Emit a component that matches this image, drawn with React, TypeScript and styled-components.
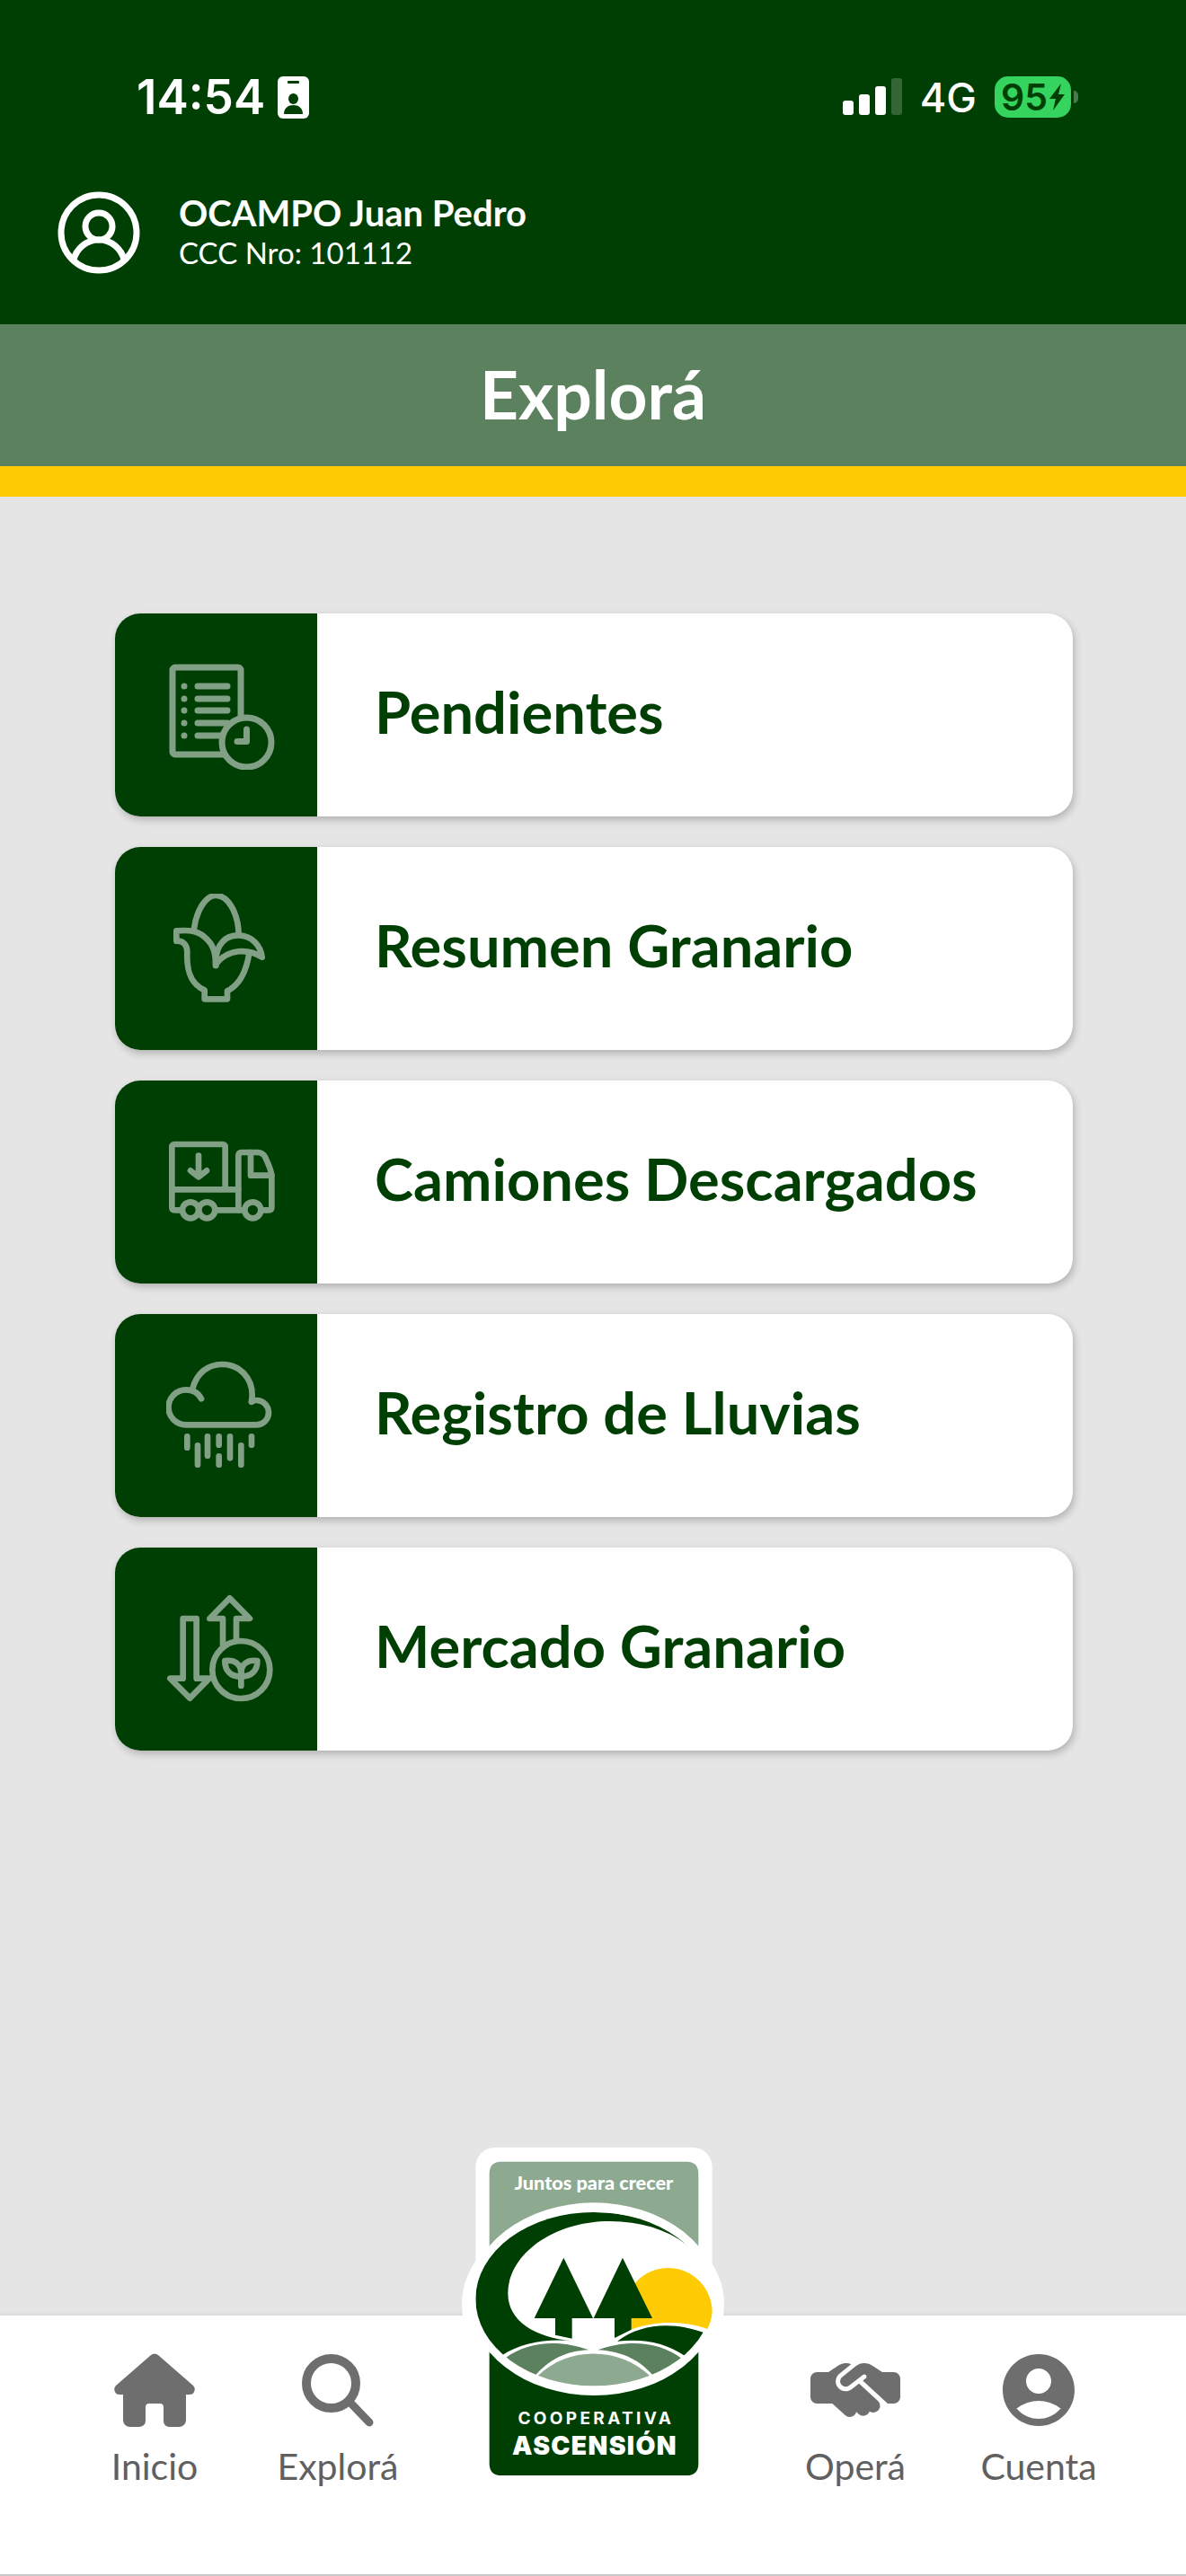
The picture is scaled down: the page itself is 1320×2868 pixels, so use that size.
import React, { FC, ReactNode } from "react";
import styled, { createGlobalStyle } from "styled-components";
import { FaHandshakeSimple } from "react-icons/fa6";
import { MdAccountCircle } from "react-icons/md";

const GREEN = "#003f03";
const SAGE = "#5c815f";
const MINT = "#8da990";
const YELLOW = "#ffcb05";

interface MenuItem {
  label: string;
  icon: ReactNode;
}

interface TabItem {
  label: string;
  icon: ReactNode;
}

const PendingIcon: FC = () => (
  <LineIcon viewBox="0 0 122 122">
    <rect x="7" y="8" width="76" height="97" rx="3" />
    <path d="M20 29v.01M20 43v.01M20 56v.01M20 70v.01M20 84v.01" />
    <path d="M35 29h33M35 43h33M35 56h33M35 70h33M35 84h27" />
    <circle cx="89.5" cy="91.5" r="27.5" fill={GREEN} />
    <path d="M89.5 77v13.500H79" />
  </LineIcon>
);

const CornIcon: FC = () => (
  <LineIcon viewBox="75 105 366 366" $thick>
    <path d="M168 222C175 165 205 111 241 111C280 111 314 165 317 238" />
    <path d="M240 345C240 300 232 278 212 258C186 230 160 225 109 229V263C134 262 145 278 145 300C143 350 150 405 203 427V457H279V430C320 410 342 368 352 304" />
    <path d="M241 345C236 270 278 243 318 244C362 246 390 278 395 317C350 288 282 288 243 338" />
  </LineIcon>
);

const TruckIcon: FC = () => (
  <LineIcon viewBox="75 45 366 366" $thick>
    <path d="M272 253V112Q272 102 262 102H104Q94 102 94 112V312Q94 322 104 322H125M94 253H316" />
    <path d="M316 322V141Q316 129 328 129H380Q398 129 406 146C416 168 427 194 427 206V312Q427 322 417 322H397" />
    <path d="M357 129V206H427M240 322H330" />
    <circle cx="156" cy="322" r="27" />
    <circle cx="211" cy="322" r="27" />
    <circle cx="364" cy="322" r="27" />
    <path d="M183 140V208M156 190L183 211L210 190" />
  </LineIcon>
);

const RainIcon: FC = () => (
  <LineIcon viewBox="75 75 366 366" $thick>
    <path d="M192 202C181 180 164 172 141 172A58 58 0 0 0 141 289H376A41 41 0 0 0 376 207Q368 207 360 212" />
    <path d="M163 168C177 115 215 87 262 87C320 87 362 132 362 190L360 212" />
    <path d="M145 328V365M180 358V422M213 328V392M251 328V356M251 394V422M288 328V400M325 358V422M360 328V356" />
  </LineIcon>
);

const MarketIcon: FC = () => (
  <LineIcon viewBox="75 75 366 366" $thick>
    <path d="M131 156H176V356H219L154 422L88 356H131Z" />
    <path d="M264 244V156H220L287 88L354 156H309V234" />
    <circle cx="325" cy="327" r="96" fill={GREEN} />
    <path d="M325 381V325" />
    <path d="M325 350C290 350 270 330 271 297C304 293 325 307 325 340C325 307 346 293 379 297C380 330 360 350 325 350" />
  </LineIcon>
);

const ProfileIcon: FC = () => (
  <svg width="92" height="92" viewBox="0 0 92 92" fill="none" stroke="#fff" strokeWidth="7">
    <circle cx="46" cy="46" r="42" />
    <circle cx="46" cy="39" r="15" />
    <path d="M18 76C21 64 32 54 46 54C60 54 71 64 74 76" />
  </svg>
);

const BadgeIcon: FC = () => (
  <svg width="35" height="47" viewBox="0 0 35 47">
    <rect width="35" height="47" rx="6" fill="#fff" />
    <rect x="11" y="5" width="13" height="3" rx="1" fill={GREEN} />
    <ellipse cx="17.500" cy="25" rx="5.500" ry="6" fill={GREEN} />
    <path d="M7 42C7 35 12 32 17.500 32S28 35 28 42Z" fill={GREEN} />
  </svg>
);

const SignalIcon: FC = () => (
  <svg width="66" height="42" viewBox="0 0 66 42" fill="#fff">
    <rect y="25" width="12" height="16" rx="3" />
    <rect x="18" y="18" width="12" height="23" rx="3" />
    <rect x="36" y="9" width="12" height="32" rx="3" />
    <rect x="54" width="12" height="41" rx="3" opacity="0.2" />
  </svg>
);

const BoltIcon: FC = () => (
  <svg width="17" height="31" viewBox="0 0 17 31">
    <path d="M13 0L0 17H7L4 30L17 12H10Z" fill={GREEN} />
  </svg>
);

const HomeIcon: FC = () => (
  <svg width="90" height="82" viewBox="0 0 90 82">
    <path
      d="M41 2Q45 -1 49 2L88 36Q91 39 89 43Q88 46 84 46H80V75Q79 81 73 82H61Q55 81 55 75V60Q55 56 51 56H39Q35 56 35 60V75Q35 81 28 82H17Q11 81 10 75V46H6Q2 46 1 43Q-1 39 2 36Z"
      fill="#6e6e6e"
    />
  </svg>
);

const SearchIcon: FC = () => (
  <svg width="80" height="82" viewBox="0 0 80 82" fill="none" stroke="#6e6e6e">
    <circle cx="32.500" cy="33.500" r="27.500" strokeWidth="10" />
    <path d="M53 54L75 77" strokeWidth="9" strokeLinecap="round" />
  </svg>
);

const CoopLogo: FC = () => (
  <LogoSvg viewBox="46 62 876 1098" role="img" aria-label="Cooperativa Ascensión">
    <defs>
      <clipPath id="scene">
        <ellipse cx="487" cy="568" rx="395" ry="290" />
      </clipPath>
    </defs>
    <rect x="92" y="62" width="790" height="1098" rx="64" fill="#fff" />
    <ellipse cx="484" cy="585" rx="438" ry="325" fill="#fff" />
    <path d="M138 600V149Q138 109 178 109H796Q836 109 836 149V600Z" fill={MINT} />
    <path d="M138 600H836V1117Q836 1157 796 1157H178Q138 1157 138 1117Z" fill={GREEN} />
    <ellipse cx="487" cy="568" rx="418" ry="322" fill="#fff" />
    <g clipPath="url(#scene)">
      <path
        d="M160 770L92 700V278H487C640 278 770 335 833 418C760 345 660 308 540 308C350 308 200 420 200 550C200 640 290 697 415 708C330 700 250 712 178 757Z"
        fill={GREEN}
      />
      <path d="M190 766C270 705 380 705 470 738C390 742 340 770 290 824L270 860Z" fill={SAGE} />
      <path d="M500 738C590 705 700 705 782 768L730 840L683 822C635 765 570 742 500 738Z" fill={SAGE} />
      <path d="M298 826C400 725 570 725 676 826L640 880H340Z" fill={MINT} />
      <path d="M565 709C650 645 760 645 860 682L880 720L793 759C720 710 650 700 565 709Z" fill={GREEN} />
    </g>
    <path d="M588 612A147 148 0 0 1 882 612Q880 640 866 668C790 640 690 640 612 670Z" fill={YELLOW} />
    <path d="M386 430L484 632H414V700L358 688V632H288Z" fill={GREEN} />
    <path d="M583 430L682 632H612V670L556 698V632H486Z" fill={GREEN} />
    <g fill="#fff" textAnchor="middle">
      <text x="487" y="202" fontSize="65" fontFamily="Lato, sans-serif" fontWeight="900">
        Juntos para crecer
      </text>
      <text x="494" y="986" fontSize="57" fontFamily="Inter, sans-serif" fontWeight="700" letterSpacing="10">
        COOPERATIVA
      </text>
      <text x="490" y="1088" fontSize="85" fontFamily="Inter, sans-serif" fontWeight="900" letterSpacing="4">
        ASCENSIÓN
      </text>
    </g>
  </LogoSvg>
);

const menu: MenuItem[] = [
  { label: "Pendientes", icon: <PendingIcon /> },
  { label: "Resumen Granario", icon: <CornIcon /> },
  { label: "Camiones Descargados", icon: <TruckIcon /> },
  { label: "Registro de Lluvias", icon: <RainIcon /> },
  { label: "Mercado Granario", icon: <MarketIcon /> },
];

const leftTabs: TabItem[] = [
  { label: "Inicio", icon: <HomeIcon /> },
  { label: "Explorá", icon: <SearchIcon /> },
];

const rightTabs: TabItem[] = [
  { label: "Operá", icon: <FaHandshakeSimple size={100} /> },
  { label: "Cuenta", icon: <MdAccountCircle size={96} /> },
];

const Tabs: FC<{ tabs: TabItem[] }> = ({ tabs }) => (
  <TabGroup>
    {tabs.map((tab) => (
      <TabLink href="#" key={tab.label}>
        <TabIcon>{tab.icon}</TabIcon>
        {tab.label}
      </TabLink>
    ))}
  </TabGroup>
);

export default function App() {
  return (
    <Page>
      <GlobalStyle />
      <Header>
        <StatusBar>
          <StatusGroup $gap={14}>
            <Clock>14:54</Clock>
            <BadgeIcon />
          </StatusGroup>
          <StatusGroup $gap={20}>
            <SignalIcon />
            <Network>4G</Network>
            <BatteryWrap>
              <Battery>
                95
                <BoltIcon />
              </Battery>
              <BatteryTip />
            </BatteryWrap>
          </StatusGroup>
        </StatusBar>
        <Profile>
          <ProfileIcon />
          <UserInfo>
            <UserName>OCAMPO Juan Pedro</UserName>
            <Account>CCC Nro: 101112</Account>
          </UserInfo>
        </Profile>
      </Header>
      <Title>Explorá</Title>
      <Menu>
        {menu.map((item) => (
          <Card href="#" key={item.label}>
            <CardIcon>{item.icon}</CardIcon>
            <CardLabel>{item.label}</CardLabel>
          </Card>
        ))}
      </Menu>
      <TabBar>
        <Tabs tabs={leftTabs} />
        <CoopLogo />
        <Tabs tabs={rightTabs} />
      </TabBar>
    </Page>
  );
}

const GlobalStyle = createGlobalStyle`
  * {
    box-sizing: border-box;
  }

  body {
    margin: 0;
    background: #e5e5e5;
    font-family: Lato, sans-serif;
  }

  svg {
    display: block;
    flex: none;
  }
`;

const Page = styled.div`
  display: flex;
  flex-direction: column;
  min-height: 100vh;
`;

const Header = styled.header`
  padding: 76px 120px 56px 64px;
  background: ${GREEN};
  color: #fff;
`;

const StatusBar = styled.div`
  display: flex;
  justify-content: space-between;
  align-items: center;
  height: 64px;
  padding-left: 88px;
  font-family: Inter, sans-serif;
`;

const StatusGroup = styled.div<{ $gap: number }>`
  display: flex;
  align-items: center;
  gap: ${({ $gap }) => $gap}px;
`;

const Clock = styled.time`
  font-size: 53px;
  font-weight: 600;
`;

const Network = styled.span`
  font-size: 45px;
  font-weight: 500;
`;

const BatteryWrap = styled.div`
  display: flex;
  align-items: center;
  gap: 3px;
`;

const Battery = styled.div`
  display: flex;
  align-items: center;
  justify-content: center;
  gap: 2px;
  width: 85px;
  height: 46px;
  border-radius: 15px;
  background: #35d45e;
  color: ${GREEN};
  font-size: 41px;
  font-weight: 600;
`;

const BatteryTip = styled.span`
  width: 5px;
  height: 14px;
  border-radius: 0 5px 5px 0;
  background: #4d774f;
`;

const Profile = styled.div`
  display: flex;
  align-items: center;
  gap: 43px;
  margin-top: 73px;
`;

const UserInfo = styled.div`
  padding-bottom: 4px;
`;

const UserName = styled.div`
  font-size: 40px;
  font-weight: 700;
  line-height: 48px;
`;

const Account = styled.div`
  font-size: 33px;
  line-height: 40px;
`;

const Title = styled.h1`
  margin: 0;
  padding-bottom: 4px;
  border-bottom: 34px solid ${YELLOW};
  background: ${SAGE};
  color: #fff;
  font-size: 75px;
  font-weight: 700;
  line-height: 154px;
  text-align: center;
`;

const Menu = styled.main`
  display: flex;
  flex: 1;
  flex-direction: column;
  gap: 34px;
  padding: 130px 126px 240px 128px;
`;

const Card = styled.a`
  display: flex;
  align-items: center;
  overflow: hidden;
  border-radius: 28px;
  background: #fff;
  box-shadow: 2px 4px 8px rgba(0, 0, 0, 0.22);
  color: ${GREEN};
  text-decoration: none;
`;

const CardIcon = styled.span`
  display: flex;
  align-items: center;
  justify-content: center;
  width: 225px;
  height: 226px;
  padding-left: 11px;
  background: ${GREEN};
`;

const CardLabel = styled.span`
  padding: 0 0 8px 64px;
  font-size: 65px;
  font-weight: 700;
`;

const LineIcon = styled.svg<{ $thick?: boolean }>`
  width: 122px;
  height: 122px;
  fill: none;
  stroke: #82a085;
  stroke-width: ${({ $thick }) => ($thick ? 20 : 7)};
  stroke-linecap: round;
  stroke-linejoin: round;

  circle[fill] {
    fill: ${GREEN};
  }
`;

const TabBar = styled.nav`
  position: relative;
  display: flex;
  justify-content: space-between;
  height: 290px;
  padding: 0 62px 0 70px;
  border-bottom: 2px solid #c8c8c8;
  background: #fff;
  box-shadow: 0 -1px 4px rgba(0, 0, 0, 0.08);
`;

const TabGroup = styled.div`
  display: grid;
  grid-template-columns: 204px 204px;
`;

const TabLink = styled.a`
  display: flex;
  flex-direction: column;
  align-items: center;
  padding-top: 34px;
  color: #606060;
  font-size: 41px;
  line-height: 48px;
  text-decoration: none;
`;

const TabIcon = styled.span`
  display: flex;
  align-items: center;
  height: 98px;
  margin-bottom: 12px;
  color: #6e6e6e;
`;

/* The badge sits over the bar and sticks out above it */
const LogoSvg = styled.svg`
  position: absolute;
  top: -187px;
  left: 50%;
  width: 292px;
  height: 366px;
  transform: translateX(-50%);
`;
